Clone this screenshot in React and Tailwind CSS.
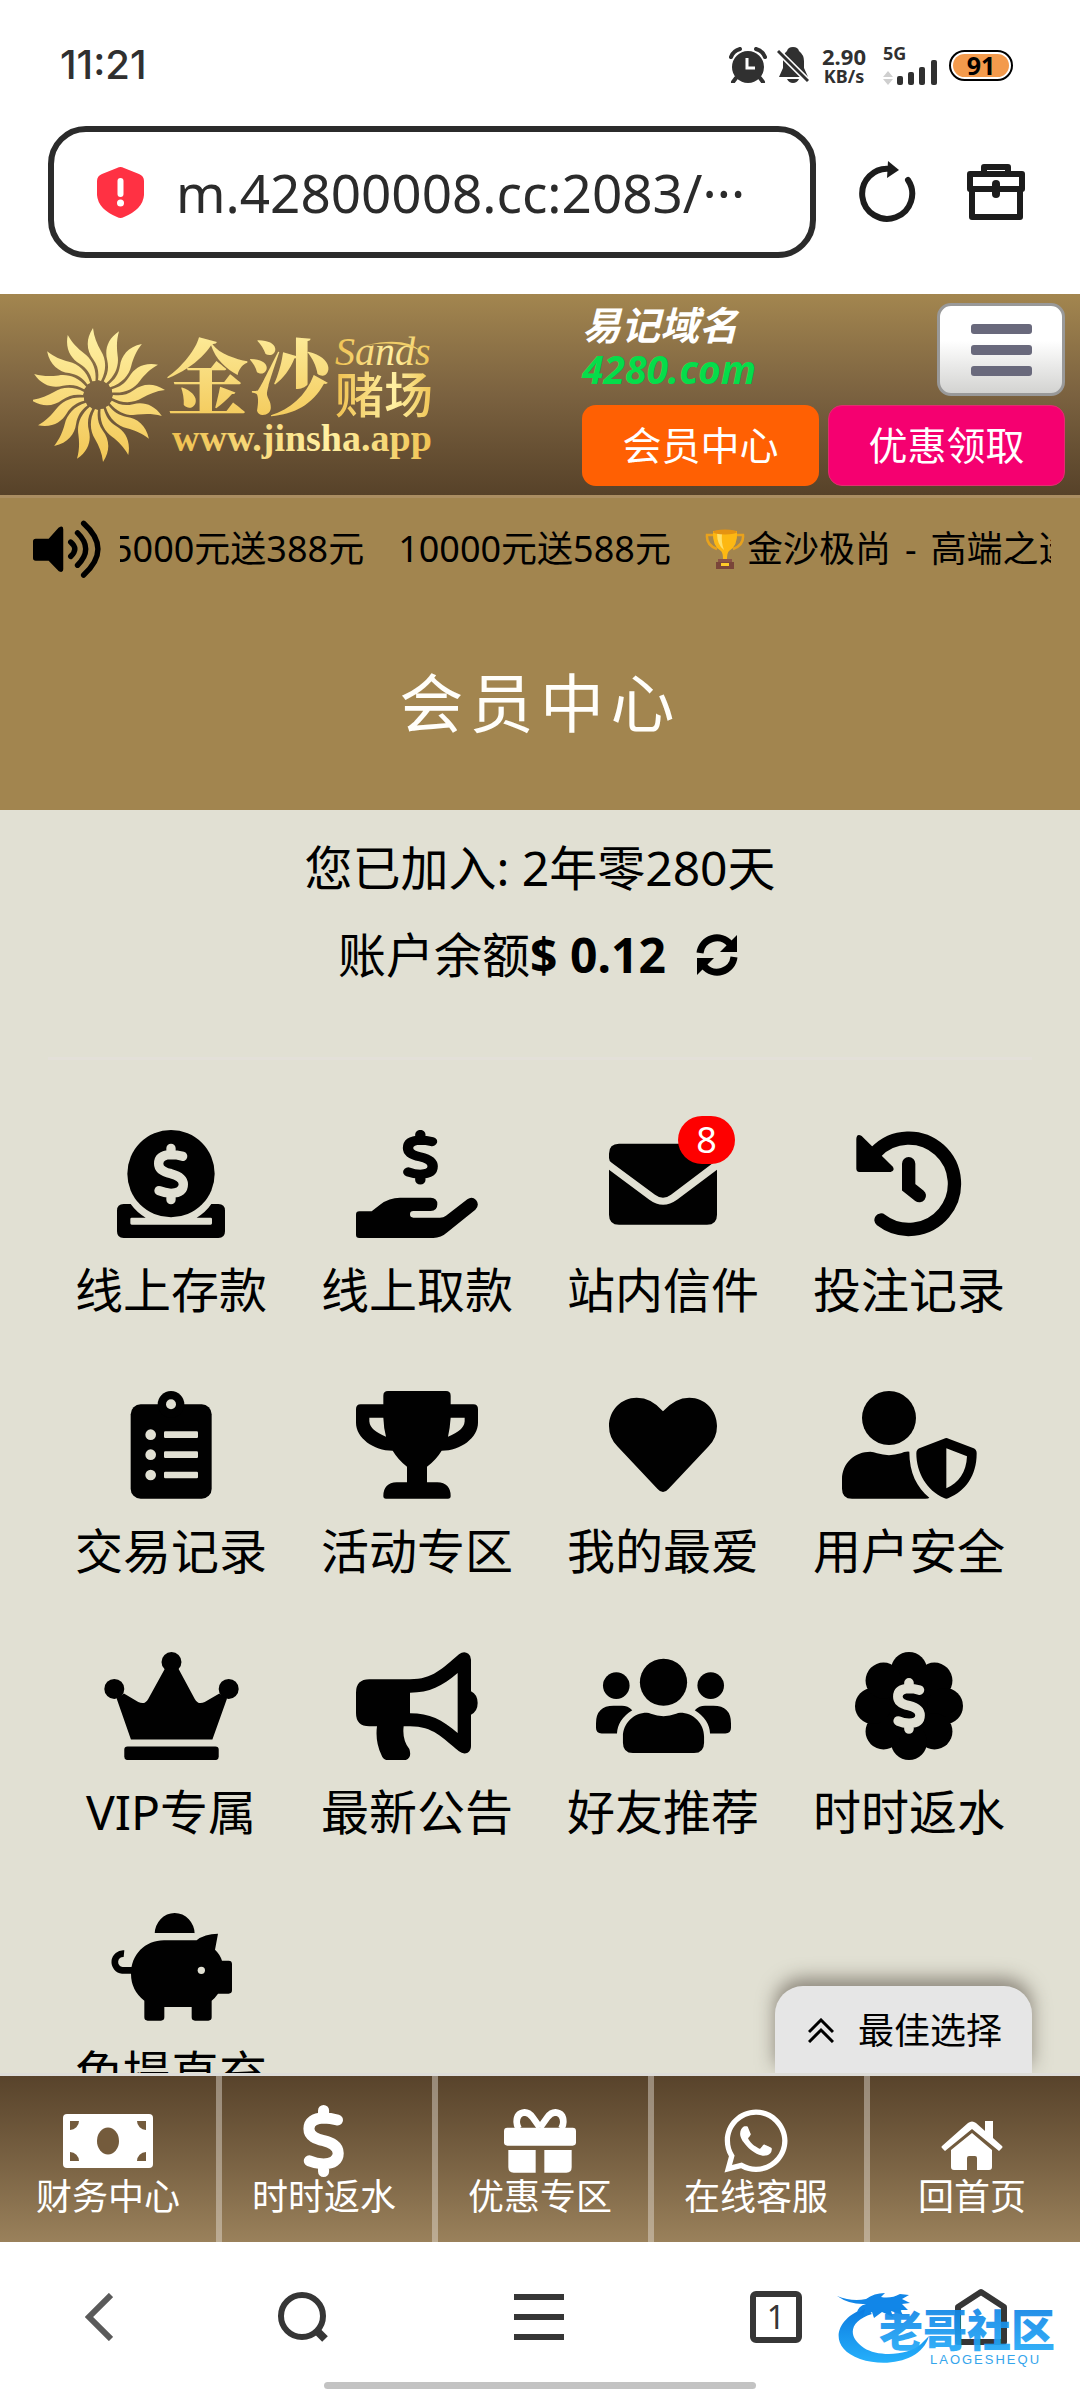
import React from "react";
import { FaWhatsapp } from "react-icons/fa6";

const INK = "#010101";
const PAPER = "#e1e0d3";

const dollar =
  "M86 38Q68 33 51 33Q14 34 14 60C14 80 33 86 51 90C70 95 88 102 88 122Q88 148 51 149Q32 148 15 141M51 14V33M51 149V168";

function Dollar({ transform, color, weight = 28 }) {
  return (
    <path
      d={dollar}
      transform={transform}
      fill="none"
      stroke={color}
      strokeWidth={weight}
      strokeLinecap="round"
      strokeLinejoin="round"
    />
  );
}

function Glyph({ box, w, children }) {
  return (
    <svg viewBox={box} className={w} fill={INK} aria-hidden="true">
      {children}
    </svg>
  );
}

const DepositIcon = () => (
  <Glyph box="231 121 324 324" w="w-[108px]">
    <circle cx="393" cy="252" r="131" />
    <path d="M251 343H272Q290 368 317 384H275Q271 384 271 388V401Q271 405 275 405H512Q516 405 516 401V388Q516 384 512 384H470Q497 368 514 343H535Q555 343 555 363V425Q555 445 535 445H251Q231 445 231 425V363Q231 343 251 343Z" />
    <Dollar transform="translate(342 162)" color={PAPER} />
  </Glyph>
);

const WithdrawIcon = () => (
  <Glyph box="948 121 366 324" w="w-[122px]">
    <Dollar transform="translate(1090 122) scale(1 0.885)" color={INK} weight={31} />
    <path d="M958 365H995L1022 344Q1047 324 1080 324H1172Q1192 324 1192 344Q1192 364 1172 364H1120Q1110 364 1110 374Q1110 384 1120 384H1200Q1210 384 1218 378L1282 329Q1296 319 1308 331Q1320 345 1306 360L1222 428Q1203 445 1180 445H958Q948 445 948 435V375Q948 365 958 365Z" />
  </Glyph>
);

const MailIcon = () => (
  <Glyph box="207 121 324 324" w="w-[108px]">
    <path d="M207 192q0-30 30-30H501q30 0 30 30V203q0 8-8 14L393 315Q369 333 345 315L215 219Q207 214 207 205Z" />
    <path d="M207 240L328 330Q369 360 411 330L531 240V375q0 30-30 30H237q-30 0-30-30Z" />
  </Glyph>
);

const HistoryIcon = () => (
  <Glyph box="945 121 324 324" w="w-[108px]">
    <path
      d="M1023 391A137 137 0 1 0 1008 187"
      fill="none"
      stroke={INK}
      strokeWidth="40"
      strokeLinecap="round"
    />
    <path d="M949 148Q950 130 965 139L1057 230Q1067 242 1052 247H958Q949 246 949 237Z" />
    <path
      d="M1106 222V293L1138 318"
      fill="none"
      stroke={INK}
      strokeWidth="40"
      strokeLinecap="round"
      strokeLinejoin="miter"
    />
  </Glyph>
);

const ClipboardIcon = () => (
  <Glyph box="231 905 324 324" w="w-[108px]">
    <rect x="272" y="945" width="243" height="283" rx="30" />
    <circle cx="393" cy="945" r="40" />
    <g fill={PAPER}>
      <circle cx="393" cy="945" r="15" />
      <circle cx="332" cy="1036" r="16" />
      <circle cx="332" cy="1096" r="16" />
      <circle cx="332" cy="1157" r="16" />
      <rect x="372" y="1026" width="102" height="20" rx="4" />
      <rect x="372" y="1086" width="102" height="20" rx="4" />
      <rect x="372" y="1147" width="102" height="20" rx="4" />
    </g>
  </Glyph>
);

const TrophyIcon = () => (
  <Glyph box="948 905 366 324" w="w-[122px]">
    <path
      fillRule="evenodd"
      d="M1044 905H1218q14 0 14 14V945H1300q14 0 14 14V1000C1314 1045 1262 1084 1205 1084Q1188 1112 1161 1132V1179H1192Q1232 1181 1232 1220q0 8-8 8H1038q-8 0-8-8Q1030 1181 1070 1179H1101V1132Q1075 1112 1058 1084C1000 1084 948 1045 948 1000V959q0-14 14-14H1030V919q0-14 14-14ZM988 985V996Q990 1024 1038 1042Q1031 1015 1030 985ZM1274 985H1232Q1230 1015 1224 1042Q1272 1024 1274 996Z"
    />
  </Glyph>
);

const HeartIcon = () => (
  <Glyph box="207 905 324 324" w="w-[108px]">
    <path d="M369 966Q405 925 448 925C495 925 531 963 531 1010Q531 1045 506 1071L386 1198Q369 1218 352 1198L232 1071Q207 1045 207 1010C207 963 243 925 290 925Q335 925 369 966Z" />
  </Glyph>
);

const ShieldUserIcon = () => (
  <Glyph box="905 905 405 324" w="w-[135px]">
    <circle cx="1046" cy="986" r="81" />
    <path d="M905 1170C905 1120 945 1087 990 1087Q1000 1087 1010 1092Q1046 1103 1082 1092Q1092 1086 1107 1087C1107 1150 1130 1195 1167 1225Q1165 1228 1155 1228H935Q905 1228 905 1198Z" />
    <path
      fillRule="evenodd"
      d="M1211 1048Q1218 1044 1225 1048L1300 1077Q1309 1081 1309 1092C1309 1160 1275 1205 1225 1226Q1218 1230 1211 1226C1160 1205 1128 1150 1128 1092Q1128 1081 1137 1077ZM1218 1077V1197C1255 1180 1278 1150 1280 1101Z"
    />
  </Glyph>
);

const CrownIcon = () => (
  <Glyph box="190 157 406 325" w="w-[135px]">
    <circle cx="393" cy="187" r="30" />
    <circle cx="221" cy="268" r="30" />
    <circle cx="565" cy="268" r="30" />
    <path d="M373 207H414L463 298Q473 317 493 307L537 282L560 297L516 420H271L228 297L250 282L293 307Q313 317 323 298Z" />
    <rect x="251" y="441" width="284" height="41" rx="10" />
  </Glyph>
);

const HornIcon = () => (
  <Glyph box="948 157 366 325" w="w-[122px]">
    <path
      fillRule="evenodd"
      d="M988 239H1110C1180 239 1205 207 1257 164Q1272 152 1285 162Q1293 168 1293 180V275Q1313 285 1313 310Q1313 335 1293 345V440Q1293 453 1283 459Q1270 465 1257 455C1207 415 1180 380 1110 380H1091Q1086 420 1108 448Q1117 475 1095 482H1045Q1030 482 1024 465Q1005 425 1011 380H988Q948 380 948 340V279Q948 239 988 239ZM1110 279V341C1170 341 1205 360 1253 400V220C1205 260 1170 279 1110 279Z"
    />
  </Glyph>
);

const GroupIcon = () => {
  const side =
    "M94 332Q107 319 125 319H150Q203 319 203 372V385Q203 402 186 402H140Q138 360 94 332Z";
  return (
    <Glyph box="-203 157 406 325" w="w-[135px]">
      <circle cx="0" cy="248" r="71" />
      <circle cx="-142" cy="258" r="40" />
      <circle cx="142" cy="258" r="40" />
      <path d="M-122 412C-122 372 -90 340 -50 340Q-44 340 -38 343Q0 358 38 343Q44 340 50 340C90 340 122 372 122 412V430Q122 461 92 461H-92Q-122 461 -122 430Z" />
      <path d={side} />
      <path d={side} transform="scale(-1 1)" />
    </Glyph>
  );
};

const RebateIcon = () => (
  <Glyph box="-162 -162 324 324" w="w-[108px]">
    <circle r="122" />
    {[0, 45, 90, 135, 180, 225, 270, 315].map((a) => (
      <circle key={a} cx="0" cy="-108" r="54" transform={`rotate(${a})`} />
    ))}
    <Dollar transform="translate(-46 -82) scale(0.9)" color={PAPER} weight={32} />
  </Glyph>
);

const PiggyIcon = () => (
  <Glyph box="210 940 366 324" w="w-[122px]">
    <path d="M344 1003A60 63 0 0 1 464 1003L464 1000H344Z" />
    <path d="M372 1022H470Q493 1002 534 1002L525 1050Q540 1064 546 1083H566q10 0 10 10V1172q0 10-10 10H534Q526 1194 515 1203V1253q0 10-10 10H465q-10 0-10-10V1222H373V1253q0 10-10 10H323q-10 0-10-10V1203Q273 1172 273 1122C273 1065 315 1022 372 1022Z" />
    <path d="M280 1112H247A25 25 0 0 1 252 1062" fill="none" stroke={INK} strokeWidth="20" />
    <circle cx="484" cy="1112" r="11" fill={PAPER} />
  </Glyph>
);

const tiles = [
  { label: "线上存款", Icon: DepositIcon },
  { label: "线上取款", Icon: WithdrawIcon },
  { label: "站内信件", Icon: MailIcon, badge: "8" },
  { label: "投注记录", Icon: HistoryIcon },
  { label: "交易记录", Icon: ClipboardIcon },
  { label: "活动专区", Icon: TrophyIcon },
  { label: "我的最爱", Icon: HeartIcon },
  { label: "用户安全", Icon: ShieldUserIcon },
  { label: "VIP专属", Icon: CrownIcon },
  { label: "最新公告", Icon: HornIcon },
  { label: "好友推荐", Icon: GroupIcon },
  { label: "时时返水", Icon: RebateIcon },
  { label: "免提直充", Icon: PiggyIcon },
];

function StatusBar() {
  return (
    <div className="flex h-[126px] shrink-0 items-center justify-between pl-[60px] pr-[67px] pt-1 text-[#303030]">
      <span className="font-['Inter',sans-serif] text-[40px] font-medium leading-none">11:21</span>
      <div className="flex items-center gap-[10px]">
        <svg viewBox="0 0 38 36" className="w-[38px]" fill="#303030" aria-label="闹钟">
          <circle cx="19" cy="20" r="16" />
          <path d="M2 10Q4 4 11 2M36 10Q34 4 27 2M7 31L4 35M31 31L34 35" stroke="#303030" strokeWidth="4" fill="none" strokeLinecap="round" />
          <path d="M18 11V21H26" stroke="#fff" strokeWidth="3" fill="none" />
        </svg>
        <svg viewBox="0 0 32 36" className="w-8" fill="#303030" aria-label="静音">
          <path d="M10 4Q11 0 16 0Q21 0 22 4Q27 8 27 14V21L31 30H2L6 21V13Q6 7 10 4Z" />
          <path d="M10 32H22Q20 36 16 36Q12 36 10 32Z" />
          <path d="M0 3L31 34" stroke="#fff" strokeWidth="6" />
          <path d="M1 4L31 34" stroke="#303030" strokeWidth="3" />
        </svg>
        <span className="flex w-[50px] flex-col items-center text-center font-bold">
          <span className="text-[22px] leading-[21px]">2.90</span>
          <span className="text-[18px] leading-[18px]">KB/s</span>
        </span>
        <span className="flex w-[60px] flex-col pl-1">
          <span className="text-[18px] font-bold leading-[14px]">5G</span>
          <svg viewBox="0 0 54 25" className="w-[54px]" fill="#303030" aria-label="信号">
            <path d="M0 17L5 11L10 17ZM0 19L5 25L10 19Z" fill="#cfcfcf" />
            <rect x="14" y="16" width="6" height="9" rx="2" />
            <rect x="25" y="12" width="6" height="13" rx="2" />
            <rect x="36" y="7" width="6" height="18" rx="2" />
            <rect x="48" y="0" width="6" height="25" rx="2" />
          </svg>
        </span>
        <span className="flex h-[31px] w-[64px] rounded-full border-2 border-black p-[2px]">
          <span className="flex flex-1 items-center justify-center rounded-full bg-[#f39a4c] text-[25px] font-bold leading-none text-black">
            91
          </span>
        </span>
      </div>
    </div>
  );
}

function AddressBar() {
  return (
    <div className="flex shrink-0 items-center pb-9 pl-12 pr-[55px]">
      <label className="flex h-[132px] min-w-0 flex-1 items-center gap-8 rounded-[38px] border-6 border-[#2b2b2b] pl-[43px] pr-10">
        <svg viewBox="0 0 47 51" className="w-[47px] shrink-0" aria-label="不安全">
          <path d="M20 1Q23.500 -1 27 1L42 7Q47 9 47 14V28Q46 42 27 50Q23.500 52 20 50Q1 42 0 28V14Q0 9 5 7Z" fill="#ff3143" />
          <path d="M23.500 14V27" stroke="#fff" strokeWidth="6" strokeLinecap="round" />
          <circle cx="23.500" cy="36" r="3.500" fill="#fff" />
        </svg>
        <input
          aria-label="网址"
          readOnly
          value="m.42800008.cc:2083/···"
          className="min-w-0 flex-1 bg-transparent text-[53px] leading-none text-[#2b2b2b] outline-none"
        />
      </label>
      <button aria-label="刷新" className="ml-[43px]">
        <svg viewBox="0 0 58 62" className="w-[58px]" fill="none" stroke="#1c1c1c" strokeWidth="6">
          <path d="M31 8A25 25 0 1 0 49 19" strokeLinecap="round" />
          <path d="M29 0L40 9L28 17Z" fill="#1c1c1c" stroke="none" />
        </svg>
      </button>
      <button aria-label="工具箱" className="ml-[50px]">
        <svg viewBox="0 0 58 58" className="w-[58px]" fill="none" stroke="#1c1c1c" strokeWidth="6" strokeLinejoin="round">
          <path d="M17 11V4H41V11" />
          <rect x="3" y="11" width="52" height="15" />
          <path d="M5 26V54H53V26" />
          <path d="M29 21V31" strokeWidth="8" strokeLinecap="round" />
        </svg>
      </button>
    </div>
  );
}

function Logo() {
  const rays = Array.from({ length: 16 }, (_, i) => i * 22.5);
  return (
    <svg viewBox="33 328 402 136" className="w-[402px]" role="img" aria-label="金沙赌场">
      <defs>
        <linearGradient id="gold" x1="0" y1="0" x2="0" y2="1">
          <stop offset="0" stopColor="#fff2a6" />
          <stop offset="1" stopColor="#f2c654" />
        </linearGradient>
        <linearGradient id="sheen" x1="0" y1="0" x2="1" y2="0">
          <stop offset="0" stopColor="#efc04f" />
          <stop offset="0.6" stopColor="#fff0a2" />
          <stop offset="1" stopColor="#efc453" />
        </linearGradient>
        <clipPath id="sun">
          {rays.map((a) => (
            <path
              key={a}
              transform={`translate(98 396) rotate(${a})`}
              d="M-5 -67C-13 -55 -11 -44 -5 -36C0 -29 1 -23 0 -15L3 -14C9 -25 8 -36 3 -44C-1 -51 -4 -58 -5 -67Z"
            />
          ))}
        </clipPath>
      </defs>
      <rect x="30" y="328" width="136" height="136" fill="url(#gold)" clipPath="url(#sun)" />
      <text x="166" y="409" fontSize="82" fontWeight="900" fill="url(#gold)" fontFamily="'Noto Serif CJK SC','Noto Sans CJK SC',serif">
        金沙
      </text>
      <text x="335" y="366" fontSize="40" fontStyle="italic" fill="url(#sheen)" fontFamily="'Liberation Serif',serif">
        Sands
      </text>
      <path d="M366 346Q405 337 421 352Q400 341 366 346Z" fill="#f2cf68" />
      <text x="335" y="414" fontSize="49" fontWeight="500" fill="url(#sheen)" fontFamily="'Noto Sans CJK SC',sans-serif">
        赌场
      </text>
      <text x="172" y="452" fontSize="38" fontWeight="700" fill="url(#sheen)" fontFamily="'Liberation Serif',serif">
        www.jinsha.app
      </text>
    </svg>
  );
}

function SiteHeader() {
  return (
    <header className="flex shrink-0 items-center justify-between border-b-3 border-[#ab8e62] bg-linear-to-b from-[#a3864f] via-[#7b6240] to-[#574229] py-[9px] pl-[33px] pr-[15px]">
      <a href="#home">
        <Logo />
      </a>
      <div className="grid w-[483px] grid-cols-2 gap-[9px]">
        <p className="self-start text-[39px] font-bold italic leading-[44px] text-white">
          <span className="block whitespace-nowrap">易记域名</span>
          <span className="block text-[#05dd4a]">4280.com</span>
        </p>
        <button
          aria-label="菜单"
          className="flex h-[93px] w-32 flex-col items-center justify-center gap-[11px] justify-self-end rounded-[14px] border-3 border-[#999] bg-linear-to-b from-white from-40% to-[#d3d3d1]"
        >
          <span className="h-[10px] w-[61px] rounded-[3px] bg-[#69697c]" />
          <span className="h-[10px] w-[61px] rounded-[3px] bg-[#69697c]" />
          <span className="h-[10px] w-[61px] rounded-[3px] bg-[#69697c]" />
        </button>
        <button className="h-[81px] rounded-[14px] bg-[#ff6003] text-[39px] text-white">会员中心</button>
        <button className="h-[81px] rounded-[14px] border border-[#e0306f] bg-[#f50070] text-[39px] text-white">
          优惠领取
        </button>
      </div>
    </header>
  );
}

function CupIcon() {
  return (
    <svg viewBox="0 0 40 40" className="w-10 shrink-0" aria-label="奖杯">
      <path d="M9 6H2Q1 16 12 20M31 6H38Q39 16 28 20" fill="none" stroke="#e9a21c" strokeWidth="2.500" />
      <path d="M8 2H32Q33 17 24 22Q22 24 22 30H18Q18 24 16 22Q7 17 8 2Z" fill="#fdb813" />
      <path d="M12 4H17Q16 14 19 21Q12 16 12 4Z" fill="#ffe06a" />
      <ellipse cx="20" cy="3" rx="12" ry="2.500" fill="#e59312" />
      <path d="M13 30H27V34H13Z" fill="#8a5346" />
      <path d="M11 33H29V40H11Z" fill="#7a4539" />
      <rect x="16" y="34" width="8" height="3" fill="#ffca28" />
    </svg>
  );
}

function Ticker() {
  return (
    <div className="flex h-[102px] shrink-0 items-center gap-[19px] pl-[33px] pr-[29px] text-black">
      <svg viewBox="97 705 200 172" className="w-[68px] shrink-0" fill="none" stroke="#000" strokeWidth="16" strokeLinecap="round" aria-label="公告">
        <path d="M105 760H143L172 728Q186 718 186 732V850Q186 862 173 856L143 825H105Q97 825 97 817V768Q97 760 105 760Z" fill="#000" stroke="none" />
        <path d="M208 770Q232 790 208 812M228 743Q276 790 228 838M246 715Q330 790 246 867" />
      </svg>
      <div className="min-w-0 flex-1 overflow-hidden">
        <div className="-ml-2 flex w-max items-center gap-[34px] text-[36px] leading-[54px]">
          <span>5000元送388元</span>
          <span>10000元送588元</span>
          <span className="flex items-center gap-[2px]">
            <CupIcon />
            <span>金沙极尚</span>
            <span className="px-3">-</span>
            <span>高端之选</span>
          </span>
        </div>
      </div>
    </div>
  );
}

function Member() {
  return (
    <main className="relative flex min-h-0 flex-1 flex-col overflow-hidden border-b-3 border-[#dddcd8] bg-[#e1e0d3] px-12 pt-[14px] text-black">
      <div className="text-center text-[48px] leading-[87px]">
        <p>您已加入: 2年零280天</p>
        <p className="flex items-center justify-center pr-1">
          账户余额<strong>$ 0.12</strong>
          <button aria-label="刷新余额" className="ml-[30px]">
            <svg viewBox="0 0 42 42" className="w-[42px]" fill="none" stroke="#000" strokeWidth="7">
              <path d="M4 19A17 17 0 0 1 34 10M38 23A17 17 0 0 1 8 32" />
              <path d="M41 1V18H24ZM1 41V24H18Z" fill="#000" stroke="none" />
            </svg>
          </button>
        </p>
      </div>
      <hr className="mt-[59px] border-t-3 border-[#e3e0d9]" />
      <ul className="mt-[70px] grid shrink-0 grid-cols-4 gap-y-[71px]">
        {tiles.map(({ label, Icon, badge }) => (
          <li key={label}>
            <a href="#tile" className="flex flex-col items-center">
              <span className="relative flex h-[108px] items-center">
                <Icon />
                {badge && (
                  <span className="absolute -right-[18px] -top-[14px] flex h-12 w-[57px] items-center justify-center rounded-full bg-[#fe0000] text-[36px] leading-none text-white">
                    {badge}
                  </span>
                )}
              </span>
              <span className="mt-[22px] whitespace-nowrap text-[48px] leading-[60px]">{label}</span>
            </a>
          </li>
        ))}
      </ul>
      <button className="absolute bottom-0 right-12 flex h-[87px] items-center gap-6 rounded-t-[28px] bg-[#e6e6e6] pl-[33px] pr-[30px] pt-[2px] text-[36px] shadow-[0_-8px_18px_rgba(60,50,40,0.5)]">
        <svg viewBox="0 0 26 25" className="w-[26px]" fill="none" stroke="#000" strokeWidth="3" aria-hidden="true">
          <path d="M1 14L13 2L25 14M1 24L13 12L25 24" />
        </svg>
        最佳选择
      </button>
    </main>
  );
}

const CashIcon = () => (
  <svg viewBox="0 0 90 54" className="w-[90px]" aria-hidden="true">
    <rect width="90" height="54" rx="4" fill="#fff" />
    <g fill="#745b3c">
      <ellipse cx="45" cy="27" rx="11" ry="13.500" />
      <path d="M7 7H16A9 9 0 0 1 7 16ZM83 7V16A9 9 0 0 1 74 7ZM7 47V38A9 9 0 0 1 16 47ZM83 47H74A9 9 0 0 1 83 38Z" />
    </g>
  </svg>
);

const CoinSignIcon = () => (
  <svg viewBox="0 0 104 182" className="h-[72px]" aria-hidden="true">
    <Dollar transform="translate(1 0)" color="#fff" />
  </svg>
);

const GiftIcon = () => (
  <svg viewBox="42 45 216 216" className="w-[72px]" fill="#fff" aria-hidden="true">
    <path
      d="M150 113L128 82Q117 67 104 67Q80 69 80 96Q80 106 86 116M150 113L172 82Q183 67 196 67Q220 69 220 96Q220 106 214 116"
      fill="none"
      stroke="#fff"
      strokeWidth="20"
      strokeLinejoin="round"
    />
    <rect x="42" y="113" width="216" height="54" rx="10" />
    <path d="M55 180H137V248H71Q55 248 55 232ZM163 180H245V232Q245 248 229 248H163Z" />
  </svg>
);

const HouseIcon = () => (
  <svg viewBox="0 0 62 49" className="w-[62px]" fill="#fff" aria-hidden="true">
    <path d="M31 12L51 29V46Q51 49 48 49H36V37Q36 35 34 35H28Q26 35 26 37V49H13Q10 49 10 46V29Z" />
    <path d="M27 2Q31 -1 35 2L44 10V0H52V17L61 25Q62 26 61 27L58 30L31 8L4 30L1 27Q0 26 1 25Z" />
  </svg>
);

const tabs = [
  { label: "财务中心", icon: <CashIcon /> },
  { label: "时时返水", icon: <CoinSignIcon /> },
  { label: "优惠专区", icon: <GiftIcon /> },
  { label: "在线客服", icon: <FaWhatsapp className="h-[72px] w-[72px]" /> },
  { label: "回首页", icon: <HouseIcon /> },
];

function TabBar() {
  return (
    <nav className="grid shrink-0 grid-cols-5 bg-linear-to-b from-[#58432b] to-[#9a815b] text-white">
      {tabs.map(({ label, icon }, i) => (
        <a
          key={label}
          href="#tab"
          className={
            "flex h-[166px] flex-col items-center pt-[29px] " +
            (i > 0 ? "shadow-[inset_6px_0_0_rgba(230,225,215,0.45)]" : "")
          }
        >
          <span className={"flex h-[72px] items-center " + (i === 4 ? "pt-2" : "")}>{icon}</span>
          <span className="text-[36px] leading-[40px]">{label}</span>
        </a>
      ))}
    </nav>
  );
}

function Watermark() {
  return (
    <svg viewBox="0 0 226 78" className="absolute bottom-6 right-[18px] w-[226px]" role="img" aria-label="老哥社区">
      <defs>
        <linearGradient id="blue" x1="0" y1="0" x2="0" y2="1">
          <stop offset="0" stopColor="#0d7be0" />
          <stop offset="1" stopColor="#25b0fb" />
        </linearGradient>
      </defs>
      <path d="M30 18C0 27 -10 57 24 69C51 78 86 71 93 46L85 54C72 66 42 67 28 58C11 47 13 31 36 24Z" fill="url(#blue)" />
      <path d="M1 6Q16 12 30 9Q38 3 49 3L45 7Q55 9 64 4L73 5L66 9L74 13L66 14L72 20L64 20L67 25L55 21L57 27L46 22L38 28L36 22L27 27L29 19L21 23Q22 16 30 14Q14 15 1 6Z" fill="#1186e8" />
      <text x="43" y="57" fontSize="44" fontWeight="900" fill="url(#blue)" fillOpacity="0.92" fontFamily="'Noto Sans CJK SC',sans-serif">
        老哥社区
      </text>
      <text x="94" y="74" fontSize="13" fontWeight="500" fill="#35a5ec" letterSpacing="2" fontFamily="'Liberation Sans',sans-serif">
        LAOGESHEQU
      </text>
    </svg>
  );
}

function BrowserBar() {
  return (
    <footer className="relative shrink-0 bg-white pb-[3px]">
      <div className="grid h-[140px] grid-cols-[198fr_210fr_262fr_212fr_198fr] items-center justify-items-center pb-[10px] pt-5">
        <button aria-label="返回">
          <svg viewBox="0 0 28 48" className="w-7" fill="none" stroke="#5a5a5a" strokeWidth="6">
            <path d="M26 2L4 24L26 46" />
          </svg>
        </button>
        <button aria-label="搜索">
          <svg viewBox="0 0 52 52" className="w-[52px]" fill="none" stroke="#363636" strokeWidth="6">
            <circle cx="25" cy="25" r="21" />
            <path d="M40 40L48 48" strokeWidth="8" />
          </svg>
        </button>
        <button aria-label="菜单" className="flex w-[50px] flex-col gap-[14px]">
          <span className="h-[6px] w-full bg-[#363636]" />
          <span className="h-[6px] w-full bg-[#363636]" />
          <span className="h-[6px] w-full bg-[#363636]" />
        </button>
        <button
          aria-label="标签页"
          className="flex h-[52px] w-[52px] items-center justify-center rounded-[6px] border-6 border-[#363636] text-[32px] leading-none text-[#363636]"
        >
          1
        </button>
        <button aria-label="主页">
          <svg viewBox="0 0 52 58" className="w-[52px]" fill="none" stroke="#363636" strokeWidth="6" strokeLinejoin="round">
            <path d="M3 19L26 4L49 19V54H3Z" />
          </svg>
        </button>
      </div>
      <div className="mx-auto h-[7px] w-2/5 rounded-full bg-[#c3c3c3]" />
      <Watermark />
    </footer>
  );
}

export default function App() {
  return (
    <div className="flex h-dvh flex-col overflow-hidden bg-white font-['Noto_Sans','Noto_Sans_CJK_SC',sans-serif]">
      <StatusBar />
      <AddressBar />
      <SiteHeader />
      <section className="shrink-0 bg-[#a2854f]">
        <Ticker />
        <h1 className="flex h-[210px] items-center justify-center pb-1 text-[64px] tracking-widest text-[#fffefa]">
          会员中心
        </h1>
      </section>
      <Member />
      <TabBar />
      <BrowserBar />
    </div>
  );
}
